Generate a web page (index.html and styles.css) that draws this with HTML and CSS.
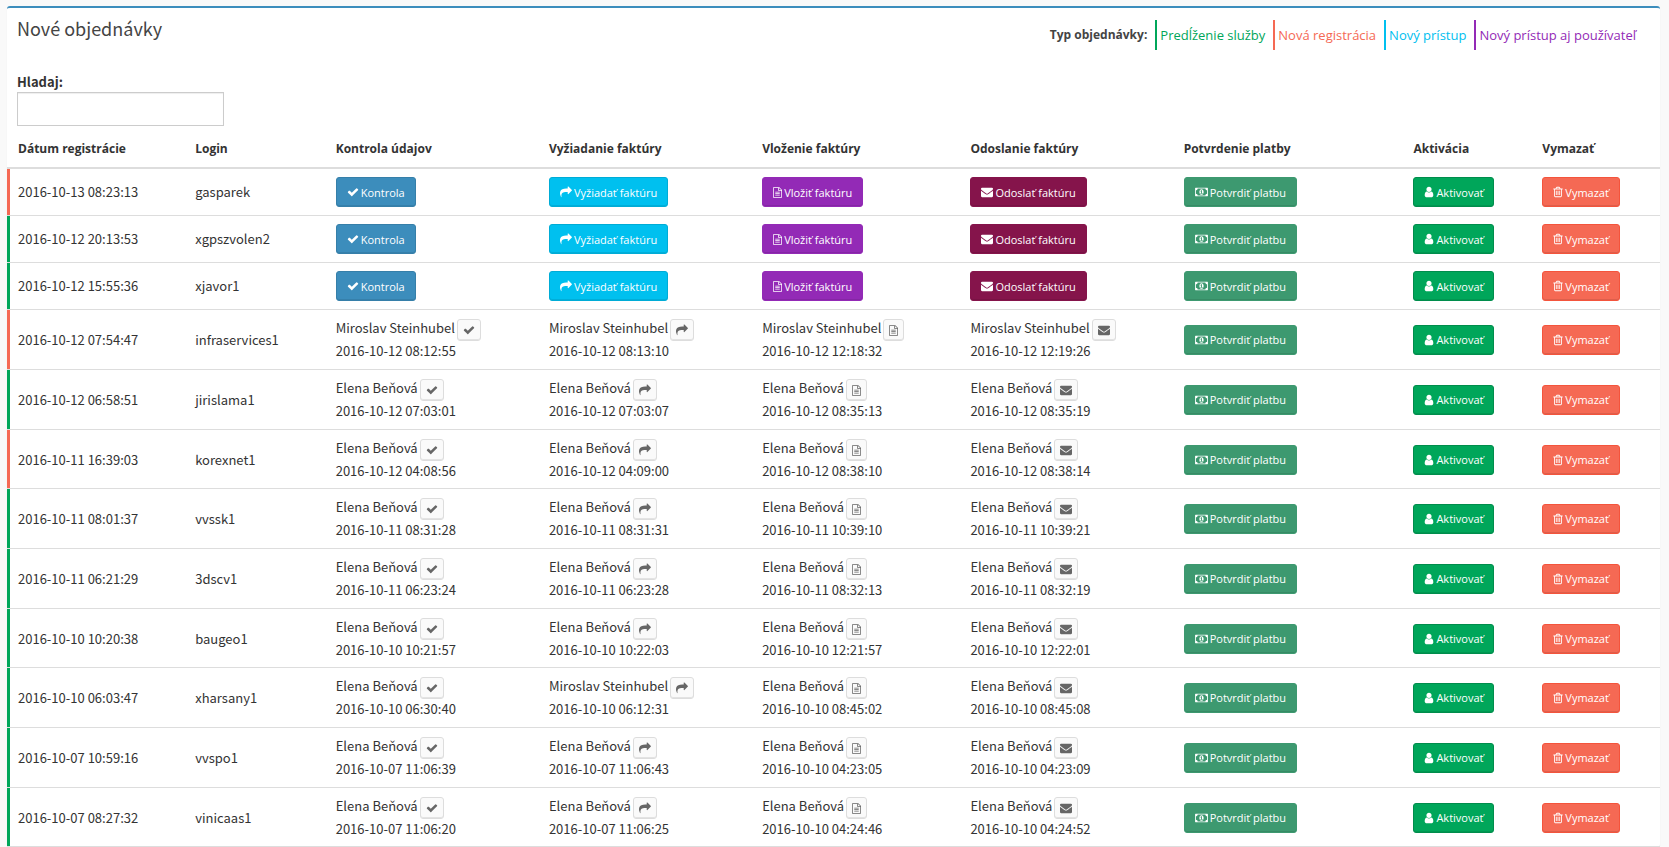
FILE: index.html
```html
<!DOCTYPE html>
<html lang="sk">
<head>
<meta charset="utf-8">
<title>Nové objednávky</title>
<link rel="stylesheet" href="styles.css">
</head>
<body>
<svg class="sprite" aria-hidden="true">
<symbol id="check" viewBox="0 0 1792 1792"><path d="M1671 566q0 40-28 68l-724 724-136 136q-28 28-68 28t-68-28l-136-136-362-362q-28-28-28-68t28-68l136-136q28-28 68-28t68 28l294 295 656-657q28-28 68-28t68 28l136 136q28 28 28 68z"/></symbol>
<symbol id="share" viewBox="0 0 1792 1792"><path d="M1792 640q0 26-19 45l-512 512q-19 19-45 19t-45-19-19-45v-256h-224q-98 0-175.500 6t-154 21.500-133 42.500-105.500 69.500-80 101-48.500 138.500-17.500 181q0 55 5 123 0 6 2.500 23.500t2.500 26.500q0 15-8.500 25t-23.500 10q-16 0-28-17-7-9-13-22t-13.500-30-10.500-24q-127-285-127-451 0-199 53-333 162-403 875-403h224v-256q0-26 19-45t45-19 45 19l512 512q19 19 19 45z"/></symbol>
<symbol id="file" viewBox="128 0 1536 1792"><path d="M1596 380q28 28 48 76t20 88v1152q0 40-28 68t-68 28h-1344q-40 0-68-28t-28-68v-1600q0-40 28-68t68-28h896q40 0 88 20t76 48zm-444-244v376h376q-10-29-22-41l-313-313q-12-12-41-22zm384 1528v-1024h-416q-40 0-68-28t-28-68v-416h-768v1536h1280zm-1024-864q0-14 9-23t23-9h704q14 0 23 9t9 23v64q0 14-9 23t-23 9h-704q-14 0-23-9t-9-23v-64zm736 224q14 0 23 9t9 23v64q0 14-9 23t-23 9h-704q-14 0-23-9t-9-23v-64q0-14 9-23t23-9h704zm0 256q14 0 23 9t9 23v64q0 14-9 23t-23 9h-704q-14 0-23-9t-9-23v-64q0-14 9-23t23-9h704z"/></symbol>
<symbol id="mail" viewBox="0 0 1792 1792"><path d="M1792 710v794q0 66-47 113t-113 47h-1472q-66 0-113-47t-47-113v-794q44 49 101 87 362 246 497 345 57 42 92.500 65.500t94.500 48 110 24.500h2q51 0 110-24.500t94.500-48 92.500-65.500q170-123 498-345 57-39 100-87zm0-294q0 79-49 151t-122 123q-376 261-468 325-10 7-42.500 31t-54 38.500-52 32.500-57.500 27-50 9h-2q-23 0-50-9t-57.500-27-52-32.500-54-38.500-42.500-31q-91-64-262-182.500t-205-142.500q-62-42-117-115.500t-55-136.500q0-78 41.500-130t118.500-52h1472q65 0 112.500 47t47.500 113z"/></symbol>
<symbol id="money" viewBox="0 0 1920 1792"><path fill-rule="evenodd" d="M64 256h1792q64 0 64 64v1152q0 64-64 64h-1792q-64 0-64-64v-1152q0-64 64-64zM384 384q0 106-75 181t-181 75v512q106 0 181 75t75 181h1152q0-106 75-181t181-75v-512q-106 0-181-75t-75-181zM960 480q140 0 230 125t90 291-90 291-230 125-230-125-90-291 90-291 230-125zM896 640q-10 70-128 100l60 96q30-10 68-40v260h-100v96h340v-96h-108v-416z"/></symbol>
<symbol id="user" viewBox="192 0 1408 1792"><path d="M1536 1399q0 109-62.500 187t-150.500 78h-854q-88 0-150.500-78t-62.500-187q0-85 8.500-160.500t31.500-152 58.500-131 94-89 134.500-34.500q131 128 313 128t313-128q76 0 134.500 34.500t94 89 58.500 131 31.500 152 8.500 160.500zm-256-887q0 159-112.500 271.500t-271.500 112.500-271.500-112.500-112.500-271.500 112.500-271.500 271.500-112.500 271.500 112.500 112.500 271.500z"/></symbol>
<symbol id="trash" viewBox="192 0 1408 1792"><path d="M704 736v576q0 14-9 23t-23 9h-64q-14 0-23-9t-9-23v-576q0-14 9-23t23-9h64q14 0 23 9t9 23zm256 0v576q0 14-9 23t-23 9h-64q-14 0-23-9t-9-23v-576q0-14 9-23t23-9h64q14 0 23 9t9 23zm256 0v576q0 14-9 23t-23 9h-64q-14 0-23-9t-9-23v-576q0-14 9-23t23-9h64q14 0 23 9t9 23zm128 724v-948h-896v948q0 22 7 40.500t14.500 27 10.500 8.500h832q3 0 10.500-8.500t14.500-27 7-40.500zm-672-1076h448l-48-117q-7-9-17-11h-317q-10 2-17 11zm928 32v64q0 14-9 23t-23 9h-96v948q0 83-47 143.500t-113 60.500h-832q-66 0-113-58.500t-47-141.500v-952h-96q-14 0-23-9t-9-23v-64q0-14 9-23t23-9h309l70-167q15-37 54-63t79-26h320q40 0 79 26t54 63l70 167h309q14 0 23 9t9 23z"/></symbol>
</svg>
<main class="box">
<header class="box-header">
<h1 class="box-title">Nové objednávky</h1>
<div class="legend">
<strong class="legend-label">Typ objednávky:</strong>
<span class="legend-item legend-green">Predĺženie služby</span>
<span class="legend-item legend-red">Nová registrácia</span>
<span class="legend-item legend-aqua">Nový prístup</span>
<span class="legend-item legend-purple">Nový prístup aj používateľ</span>
</div>
</header>
<div class="search">
<label class="search-label" for="search">Hladaj:</label>
<input class="search-input" id="search" type="text">
</div>
<table class="orders">
<thead>
<tr><th class="col-date">Dátum registrácie</th><th class="col-login">Login</th><th class="col-step">Kontrola údajov</th><th class="col-step">Vyžiadanie faktúry</th><th class="col-insert">Vloženie faktúry</th><th class="col-step">Odoslanie faktúry</th><th class="col-pay">Potvrdenie platby</th><th class="col-act">Aktivácia</th><th class="col-del">Vymazať</th></tr>
</thead>
<tbody id="orders"></tbody>
</table>
</main>
<script src="orders.js"></script>
</body>
</html>
```
FILE: styles.css
```css
* {
  box-sizing: border-box;
}

body {
  margin: 0;
  padding: 6px 9px 0 7px;
  background: #f9f9f9;
  color: #333;
  font-family: "Noto Sans CJK SC", "Noto Sans", sans-serif;
  font-size: 13px;
  line-height: 20px;
}

.sprite {
  display: none;
}

.box {
  background: #fff;
  border-top: 2px solid #3c8dbc;
  border-radius: 3px;
  box-shadow: 0 1px 1px rgba(0, 0, 0, 0.1);
}

.box-header {
  display: flex;
  justify-content: space-between;
  align-items: flex-start;
  padding: 12px 24px 0 10px;
  color: #444;
}

.box-title {
  margin: 0;
  font-size: 18px;
  font-weight: 400;
  line-height: 16px;
}

.legend {
  display: flex;
  align-items: center;
  gap: 8px;
  font-family: "Open Sans", sans-serif;
}

.legend-label {
  font-size: 12px;
}

.legend-item {
  padding-left: 3px;
  border-left: 2px solid;
  line-height: 30px;
}

.legend-green {
  color: #00a65a;
}

.legend-red {
  color: #f56954;
}

.legend-aqua {
  color: #00c0ef;
}

.legend-purple {
  color: #932ab6;
}

.search {
  display: flex;
  flex-direction: column;
  align-items: flex-start;
  padding: 22px 10px 5px;
}

.search-label {
  font-weight: 700;
}

.search-input {
  width: 207px;
  height: 34px;
  padding: 6px 12px;
  border: 1px solid #ccc;
  box-shadow: inset 0 1px 1px rgba(0, 0, 0, 0.07);
  font: inherit;
}

.orders {
  width: 100%;
  table-layout: fixed;
  border-spacing: 0;
}

.orders th {
  padding: 8px;
  border-bottom: 2px solid #ddd;
  font-family: "Open Sans", sans-serif;
  font-size: 12px;
  text-align: left;
  white-space: nowrap;
}

.orders td {
  padding: 8px;
  border-bottom: 1px solid #ddd;
  vertical-align: middle;
  white-space: nowrap;
}

.orders tr:nth-child(3n+6) td {
  padding-bottom: 7px;
}

.orders th:first-child,
.orders td:first-child {
  padding-left: 11px;
}

.order-new td:first-child {
  box-shadow: inset 3px 0 #f56954;
}

.order-renewal td:first-child {
  box-shadow: inset 3px 0 #00a65a;
}

.col-date {
  width: 10.9%;
}

.col-login {
  width: 8.5%;
}

.col-step {
  width: 12.9%;
}

.col-insert {
  width: 12.6%;
}

.col-pay {
  width: 13.9%;
}

.col-act {
  width: 7.8%;
}

.btn {
  display: flex;
  align-items: center;
  gap: 2px;
  height: 30px;
  padding: 0 10px;
  border: 1px solid;
  border-radius: 3px;
  box-shadow: inset 0 -1px rgba(0, 0, 0, 0.09);
  color: #fff;
  font-family: "Open Sans", sans-serif;
  font-size: 11px;
  font-weight: 500;
  cursor: pointer;
}

.icon {
  height: 12px;
  fill: currentColor;
}

.icon-check,
.icon-share,
.icon-mail {
  width: 12px;
}

.icon-user,
.icon-trash {
  width: 10px;
}

.icon-file {
  width: 9px;
  height: 11px;
}

.icon-money {
  width: 13px;
}

.btn-primary {
  background: #3c8dbc;
  border-color: #367fa9;
}

.btn-info {
  background: #00c0ef;
  border-color: #00acd6;
}

.btn-purple {
  background: #932ab6;
  border-color: #932ab6;
}

.btn-maroon {
  background: #85144b;
  border-color: #85144b;
}

.btn-olive {
  background: #3d9970;
  border-color: #3d9970;
}

.btn-success {
  background: #00a65a;
  border-color: #008d4c;
}

.btn-danger {
  background: #f56954;
  border-color: #f4543c;
}

.btn-small {
  height: 22px;
  margin-top: 1px;
  padding: 0 5px;
  background: #fafafa;
  border-color: #ddd;
  color: #666;
}

.done {
  display: flex;
  align-items: flex-start;
  gap: 2px;
}

.done-time {
  display: block;
}
```
FILE: orders.js
```
const M = 'Miroslav Steinhubel';
const E = 'Elena Beňová';

const steps = [
  ['check', 'Kontrola', 'btn-primary'],
  ['share', 'Vyžiadať faktúru', 'btn-info'],
  ['file', 'Vložiť faktúru', 'btn-purple'],
  ['mail', 'Odoslať faktúru', 'btn-maroon'],
];

const finals = [
  ['money', 'Potvrdiť platbu', 'btn-olive'],
  ['user', 'Aktivovať', 'btn-success'],
  ['trash', 'Vymazať', 'btn-danger'],
];

// type, registration date, login, completed steps as [name, time]
const orders = [
  ['new', '2016-10-13 08:23:13', 'gasparek'],
  ['renewal', '2016-10-12 20:13:53', 'xgpszvolen2'],
  ['renewal', '2016-10-12 15:55:36', 'xjavor1'],
  ['new', '2016-10-12 07:54:47', 'infraservices1', [M, '2016-10-12 08:12:55'], [M, '2016-10-12 08:13:10'], [M, '2016-10-12 12:18:32'], [M, '2016-10-12 12:19:26']],
  ['renewal', '2016-10-12 06:58:51', 'jirislama1', [E, '2016-10-12 07:03:01'], [E, '2016-10-12 07:03:07'], [E, '2016-10-12 08:35:13'], [E, '2016-10-12 08:35:19']],
  ['new', '2016-10-11 16:39:03', 'korexnet1', [E, '2016-10-12 04:08:56'], [E, '2016-10-12 04:09:00'], [E, '2016-10-12 08:38:10'], [E, '2016-10-12 08:38:14']],
  ['renewal', '2016-10-11 08:01:37', 'vvssk1', [E, '2016-10-11 08:31:28'], [E, '2016-10-11 08:31:31'], [E, '2016-10-11 10:39:10'], [E, '2016-10-11 10:39:21']],
  ['renewal', '2016-10-11 06:21:29', '3dscv1', [E, '2016-10-11 06:23:24'], [E, '2016-10-11 06:23:28'], [E, '2016-10-11 08:32:13'], [E, '2016-10-11 08:32:19']],
  ['renewal', '2016-10-10 10:20:38', 'baugeo1', [E, '2016-10-10 10:21:57'], [E, '2016-10-10 10:22:03'], [E, '2016-10-10 12:21:57'], [E, '2016-10-10 12:22:01']],
  ['renewal', '2016-10-10 06:03:47', 'xharsany1', [E, '2016-10-10 06:30:40'], [M, '2016-10-10 06:12:31'], [E, '2016-10-10 08:45:02'], [E, '2016-10-10 08:45:08']],
  ['renewal', '2016-10-07 10:59:16', 'vvspo1', [E, '2016-10-07 11:06:39'], [E, '2016-10-07 11:06:43'], [E, '2016-10-10 04:23:05'], [E, '2016-10-10 04:23:09']],
  ['renewal', '2016-10-07 08:27:32', 'vinicaas1', [E, '2016-10-07 11:06:20'], [E, '2016-10-07 11:06:25'], [E, '2016-10-10 04:24:46'], [E, '2016-10-10 04:24:52']],
];

const icon = (name) => `<svg class="icon icon-${name}" aria-hidden="true"><use href="#${name}"/></svg>`;
const button = ([name, label, cls]) => `<button class="btn ${cls}" type="button">${icon(name)}${label}</button>`;
const done = ([name, label], [who, time]) =>
  `<div class="done"><span>${who}</span><button class="btn btn-small" type="button" aria-label="${label}">${icon(name)}</button></div><time class="done-time">${time}</time>`;

document.getElementById('orders').innerHTML = orders.map(([type, date, login, ...log]) => {
  const cells = [
    date,
    login,
    ...steps.map((step, i) => (log[i] ? done(step, log[i]) : button(step))),
    ...finals.map(button),
  ];
  return `<tr class="order-${type}">${cells.map((c) => `<td>${c}</td>`).join('')}</tr>`;
}).join('');
```
